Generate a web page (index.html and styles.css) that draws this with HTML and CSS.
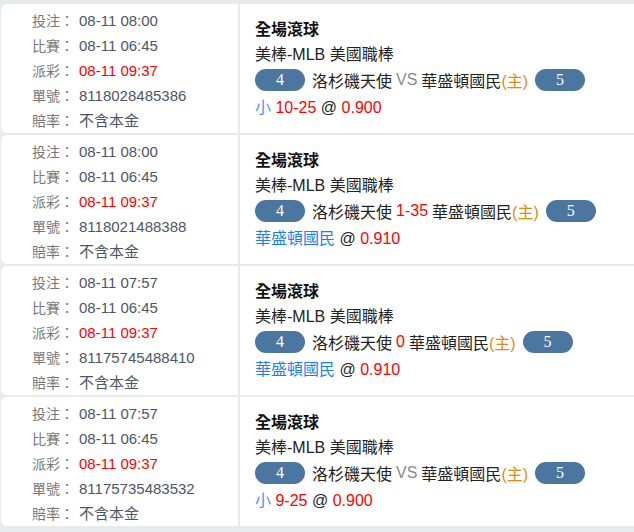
FILE: index.html
```html
<!DOCTYPE html>
<html lang="zh-Hant">
<head>
    <meta charset="UTF-8">
    <meta name="viewport" content="width=device-width, initial-scale=1.0">
    <title>注單紀錄</title>
    <link rel="stylesheet" href="styles.css">
</head>
<body>
    <div class="bet-list">
        <div class="bet-row">
            <div class="bet-info">
                <div class="info-line"><span class="label">投注：</span><span class="value">08-11 08:00</span></div>
                <div class="info-line"><span class="label">比賽：</span><span class="value">08-11 06:45</span></div>
                <div class="info-line"><span class="label">派彩：</span><span class="value red">08-11 09:37</span></div>
                <div class="info-line"><span class="label">單號：</span><span class="value">8118028485386</span></div>
                <div class="info-line"><span class="label">賠率：</span><span class="value">不含本金</span></div>
            </div>
            <div class="bet-detail">
                <div class="title">全場滾球</div>
                <div class="league">美棒-MLB 美國職棒</div>
                <div class="match">
                    <span class="pill">4</span>
                    <span class="team">洛杉磯天使</span>
                    <span class="vs">VS</span>
                    <span class="team">華盛頓國民<span class="home">(主)</span></span>
                    <span class="pill">5</span>
                </div>
                <div class="pick"><span class="light-blue">小</span> <span class="red">10-25</span> @ <span class="red">0.900</span></div>
            </div>
        </div>

        <div class="bet-row">
            <div class="bet-info">
                <div class="info-line"><span class="label">投注：</span><span class="value">08-11 08:00</span></div>
                <div class="info-line"><span class="label">比賽：</span><span class="value">08-11 06:45</span></div>
                <div class="info-line"><span class="label">派彩：</span><span class="value red">08-11 09:37</span></div>
                <div class="info-line"><span class="label">單號：</span><span class="value">8118021488388</span></div>
                <div class="info-line"><span class="label">賠率：</span><span class="value">不含本金</span></div>
            </div>
            <div class="bet-detail">
                <div class="title">全場滾球</div>
                <div class="league">美棒-MLB 美國職棒</div>
                <div class="match">
                    <span class="pill">4</span>
                    <span class="team">洛杉磯天使</span>
                    <span class="red">1-35</span>
                    <span class="team">華盛頓國民<span class="home">(主)</span></span>
                    <span class="pill">5</span>
                </div>
                <div class="pick"><span class="blue">華盛頓國民</span> @ <span class="red">0.910</span></div>
            </div>
        </div>

        <div class="bet-row">
            <div class="bet-info">
                <div class="info-line"><span class="label">投注：</span><span class="value">08-11 07:57</span></div>
                <div class="info-line"><span class="label">比賽：</span><span class="value">08-11 06:45</span></div>
                <div class="info-line"><span class="label">派彩：</span><span class="value red">08-11 09:37</span></div>
                <div class="info-line"><span class="label">單號：</span><span class="value">81175745488410</span></div>
                <div class="info-line"><span class="label">賠率：</span><span class="value">不含本金</span></div>
            </div>
            <div class="bet-detail">
                <div class="title">全場滾球</div>
                <div class="league">美棒-MLB 美國職棒</div>
                <div class="match">
                    <span class="pill">4</span>
                    <span class="team">洛杉磯天使</span>
                    <span class="red">0</span>
                    <span class="team">華盛頓國民<span class="home">(主)</span></span>
                    <span class="pill">5</span>
                </div>
                <div class="pick"><span class="blue">華盛頓國民</span> @ <span class="red">0.910</span></div>
            </div>
        </div>

        <div class="bet-row">
            <div class="bet-info">
                <div class="info-line"><span class="label">投注：</span><span class="value">08-11 07:57</span></div>
                <div class="info-line"><span class="label">比賽：</span><span class="value">08-11 06:45</span></div>
                <div class="info-line"><span class="label">派彩：</span><span class="value red">08-11 09:37</span></div>
                <div class="info-line"><span class="label">單號：</span><span class="value">81175735483532</span></div>
                <div class="info-line"><span class="label">賠率：</span><span class="value">不含本金</span></div>
            </div>
            <div class="bet-detail">
                <div class="title">全場滾球</div>
                <div class="league">美棒-MLB 美國職棒</div>
                <div class="match">
                    <span class="pill">4</span>
                    <span class="team">洛杉磯天使</span>
                    <span class="vs">VS</span>
                    <span class="team">華盛頓國民<span class="home">(主)</span></span>
                    <span class="pill">5</span>
                </div>
                <div class="pick"><span class="light-blue">小</span> <span class="red">9-25</span> @ <span class="red">0.900</span></div>
            </div>
        </div>
    </div>
</body>
</html>
```

FILE: styles.css
```css
body {
    margin: 0;
    background-color: #e8eaee;
    font-family: "Liberation Sans", "Noto Sans CJK TC", sans-serif;
    color: #222;
}

.bet-list {
    padding: 4px 0 0 1px;
}

.bet-row {
    display: grid;
    grid-template-columns: 237px 1fr;
    gap: 2px;
    height: 129px;
    margin-bottom: 2px;
}

.bet-info {
    background-color: #fff;
    border-radius: 6px 0 0 6px;
    padding: 3px 0 0 31px;
    display: flex;
    flex-direction: column;
    justify-content: center;
}

.info-line {
    height: 25px;
    line-height: 25px;
    font-size: 15px;
    white-space: nowrap;
}

.label {
    display: inline-block;
    width: 47px;
    font-size: 14px;
    color: #777;
}

.value {
    color: #4d5665;
}

.bet-detail {
    background-color: #fff;
    padding: 1px 0 0 15px;
    display: flex;
    flex-direction: column;
    justify-content: center;
    font-size: 16px;
}

.title {
    line-height: 25px;
    font-weight: bold;
    color: #111;
}

.league {
    line-height: 25px;
}

.match {
    display: flex;
    align-items: center;
    gap: 4px;
    height: 25px;
    white-space: nowrap;
}

.pill {
    display: inline-block;
    width: 50px;
    height: 22px;
    line-height: 22px;
    border-radius: 11px;
    background-color: #4a76a0;
    color: #fff;
    text-align: center;
    font-family: "Liberation Serif", serif;
    font-size: 16px;
}

.match .pill:first-child {
    margin-right: 3px;
}

.match .pill:last-child {
    margin-left: 3px;
}

.vs {
    color: #8a8a8a;
}

.home {
    color: #df8a12;
}

.pick {
    line-height: 27px;
    padding-top: 2px;
    white-space: nowrap;
}

.red {
    color: #f00;
}

.blue {
    color: #1a7ff0;
}

.light-blue {
    color: #4b93ff;
}
```
